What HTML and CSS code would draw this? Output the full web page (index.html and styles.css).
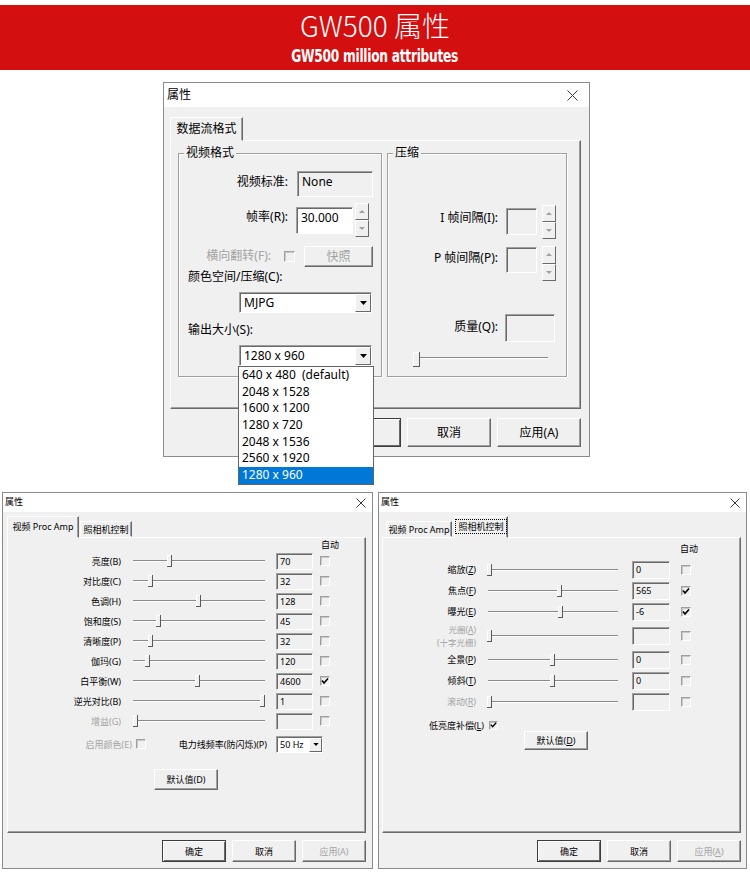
FILE: index.html
```html
<!DOCTYPE html>
<html lang="zh-CN">
<head>
<meta charset="utf-8">
<title>GW500 属性</title>
<link rel="stylesheet" href="styles.css">
</head>
<body>
<header class="banner">
  <h1 class="banner-title">GW500 属性</h1>
  <p class="banner-sub">GW500 million attributes</p>
</header>

<section class="dlg dlg-top">
  <div class="titlebar tb-top">
    <span>属性</span>
    <svg class="close close-top" viewBox="0 0 11 11"><path d="M0.5 0.5L10.5 10.5M10.5 0.5L0.5 10.5"/></svg>
  </div>
  <div class="body-top">
    <div class="tabs"><div class="tab tab-top">数据流格式</div></div>
    <div class="panel panel-top">
      <div class="group g-video">
        <span class="legend">视频格式</span>
        <div class="frow r-std">
          <span class="flabel">视频标准:</span>
          <div class="field ro f-std">None</div>
        </div>
        <div class="frow r-rate">
          <span class="flabel">帧率(R):</span>
          <div class="field f-rate">30.000</div>
          <div class="spin spin-rate">
            <span class="spin-btn"><svg viewBox="0 0 6 3"><path d="M0 3L3 0L6 3z"/></svg></span>
            <span class="spin-btn"><svg viewBox="0 0 6 3"><path d="M0 0L6 0L3 3z"/></svg></span>
          </div>
        </div>
        <div class="frow r-flip">
          <span class="flabel flabel-flip dis">横向翻转(F):</span>
          <span class="chk chk-top"></span>
          <span class="btn btn-snap dis">快照</span>
        </div>
        <div class="plabel pl-color">颜色空间/压缩(C):</div>
        <div class="combo combo-top c-mjpg">
          <span class="combo-val">MJPG</span>
          <span class="combo-btn"><svg viewBox="0 0 7 4"><path d="M0 0H7L3.5 4z"/></svg></span>
        </div>
        <div class="plabel pl-size">输出大小(S):</div>
        <div class="combo combo-top c-size">
          <span class="combo-val">1280 x 960</span>
          <span class="combo-btn"><svg viewBox="0 0 7 4"><path d="M0 0H7L3.5 4z"/></svg></span>
          <ul class="dropdown">
            <li>640 x 480  (default)</li>
            <li>2048 x 1528</li>
            <li>1600 x 1200</li>
            <li>1280 x 720</li>
            <li>2048 x 1536</li>
            <li>2560 x 1920</li>
            <li class="sel">1280 x 960</li>
          </ul>
        </div>
      </div>
      <div class="group g-comp">
        <span class="legend">压缩</span>
        <div class="frow r-i">
          <span class="flabel2 fl-i">I 帧间隔(I):</span>
          <div class="field ro f-i"></div>
          <div class="spin spin2">
            <span class="spin-btn"><svg viewBox="0 0 6 3"><path d="M0 3L3 0L6 3z"/></svg></span>
            <span class="spin-btn"><svg viewBox="0 0 6 3"><path d="M0 0L6 0L3 3z"/></svg></span>
          </div>
        </div>
        <div class="frow r-p">
          <span class="flabel2 fl-p">P 帧间隔(P):</span>
          <div class="field ro f-p"></div>
          <div class="spin spin2 spin-p">
            <span class="spin-btn"><svg viewBox="0 0 6 3"><path d="M0 3L3 0L6 3z"/></svg></span>
            <span class="spin-btn"><svg viewBox="0 0 6 3"><path d="M0 0L6 0L3 3z"/></svg></span>
          </div>
        </div>
        <div class="frow r-q">
          <span class="flabel2 fl-q">质量(Q):</span>
          <div class="field ro f-q"></div>
        </div>
        <div class="slider slider-top">
          <span class="track"></span>
          <span class="thumb thumb-top"></span>
        </div>
      </div>
    </div>
    <div class="btnrow btnrow-top">
      <span class="btn btn-top btn-def">确定</span>
      <span class="btn btn-top">取消</span>
      <span class="btn btn-top">应用(A)</span>
    </div>
  </div>
</section>

<div class="bottom-row">
  <section class="dlg dlg-sm dlg-left">
    <div class="titlebar tb-sm">
      <span>属性</span>
      <svg class="close close-sm" viewBox="0 0 10 10"><path d="M0.5 0.5L9.5 9.5M9.5 0.5L0.5 9.5"/></svg>
    </div>
    <div class="body-sm body-left">
      <div class="tabs tabs-sm">
        <div class="tab tab-sel-sm tab-l1">视频 Proc Amp</div>
        <div class="tab tab-un-sm tab-l2">照相机控制</div>
      </div>
      <div class="panel panel-sm">
        <div class="hdr hdr-left">自动</div>
        <div class="srow srow-l">
          <span class="slabel sl-left">亮度(B)</span>
          <div class="slider slider-sm sl-w-left"><span class="track"></span><span class="thumb" style="left:28.8%"></span></div>
          <div class="field ro val val-left">70</div>
          <span class="chk chk-sm chk-left"></span>
        </div>
        <div class="srow srow-l">
          <span class="slabel sl-left">对比度(C)</span>
          <div class="slider slider-sm sl-w-left"><span class="track"></span><span class="thumb" style="left:14.4%"></span></div>
          <div class="field ro val val-left">32</div>
          <span class="chk chk-sm chk-left"></span>
        </div>
        <div class="srow srow-l">
          <span class="slabel sl-left">色调(H)</span>
          <div class="slider slider-sm sl-w-left"><span class="track"></span><span class="thumb" style="left:50.4%"></span></div>
          <div class="field ro val val-left">128</div>
          <span class="chk chk-sm chk-left"></span>
        </div>
        <div class="srow srow-l">
          <span class="slabel sl-left">饱和度(S)</span>
          <div class="slider slider-sm sl-w-left"><span class="track"></span><span class="thumb" style="left:20.5%"></span></div>
          <div class="field ro val val-left">45</div>
          <span class="chk chk-sm chk-left"></span>
        </div>
        <div class="srow srow-l">
          <span class="slabel sl-left">清晰度(P)</span>
          <div class="slider slider-sm sl-w-left"><span class="track"></span><span class="thumb" style="left:14.4%"></span></div>
          <div class="field ro val val-left">32</div>
          <span class="chk chk-sm chk-left"></span>
        </div>
        <div class="srow srow-l">
          <span class="slabel sl-left">伽玛(G)</span>
          <div class="slider slider-sm sl-w-left"><span class="track"></span><span class="thumb" style="left:12.1%"></span></div>
          <div class="field ro val val-left">120</div>
          <span class="chk chk-sm chk-left"></span>
        </div>
        <div class="srow srow-l">
          <span class="slabel sl-left">白平衡(W)</span>
          <div class="slider slider-sm sl-w-left"><span class="track"></span><span class="thumb" style="left:50%"></span></div>
          <div class="field ro val val-left">4600</div>
          <span class="chk chk-sm chk-left"><svg viewBox="0 0 8 8"><path d="M1 3.5L3 6L7 1.5"/></svg></span>
        </div>
        <div class="srow srow-l">
          <span class="slabel sl-left">逆光对比(B)</span>
          <div class="slider slider-sm sl-w-left"><span class="track"></span><span class="thumb" style="left:99.5%"></span></div>
          <div class="field ro val val-left">1</div>
          <span class="chk chk-sm chk-left"></span>
        </div>
        <div class="srow srow-l">
          <span class="slabel sl-left dis">增益(G)</span>
          <div class="slider slider-sm sl-w-left"><span class="track"></span><span class="thumb" style="left:3.4%"></span></div>
          <div class="field ro val val-left"></div>
          <span class="chk chk-sm chk-left"></span>
        </div>
        <div class="crow">
          <span class="c-lbl1 dis">启用颜色(E)</span>
          <span class="chk chk-sm chk-c"></span>
          <span class="c-lbl2">电力线频率(防闪烁)(P)</span>
          <div class="combo combo-sm">
            <span class="combo-val">50 Hz</span>
            <span class="combo-btn"><svg viewBox="0 0 7 4"><path d="M0 0H7L3.5 4z"/></svg></span>
          </div>
        </div>
        <span class="btn btn-sm btn-defval-left">默认值(D)</span>
      </div>
      <div class="btnrow btnrow-sm">
        <span class="btn btn-sm btn-def">确定</span>
        <span class="btn btn-sm">取消</span>
        <span class="btn btn-sm dis">应用(A)</span>
      </div>
    </div>
  </section>

  <section class="dlg dlg-sm dlg-right">
    <div class="titlebar tb-sm">
      <span>属性</span>
      <svg class="close close-sm" viewBox="0 0 10 10"><path d="M0.5 0.5L9.5 9.5M9.5 0.5L0.5 9.5"/></svg>
    </div>
    <div class="body-sm body-right">
      <div class="tabs tabs-sm tabs-right">
        <div class="tab tab-un-sm tab-r1">视频 Proc Amp</div>
        <div class="tab tab-sel-sm tab-r2"><span class="focus">照相机控制</span></div>
      </div>
      <div class="panel panel-sm">
        <div class="hdr hdr-right">自动</div>
        <div class="srow srow-r">
          <span class="slabel sl-right">缩放(<u>Z</u>)</span>
          <div class="slider slider-sm sl-w-right"><span class="track"></span><span class="thumb" style="left:2.3%"></span></div>
          <div class="field ro val val-right">0</div>
          <span class="chk chk-sm chk-right"></span>
        </div>
        <div class="srow srow-r">
          <span class="slabel sl-right">焦点(<u>F</u>)</span>
          <div class="slider slider-sm sl-w-right"><span class="track"></span><span class="thumb" style="left:56.2%"></span></div>
          <div class="field ro val val-right">565</div>
          <span class="chk chk-sm chk-right"><svg viewBox="0 0 8 8"><path d="M1 3.5L3 6L7 1.5"/></svg></span>
        </div>
        <div class="srow srow-r">
          <span class="slabel sl-right">曝光(<u>E</u>)</span>
          <div class="slider slider-sm sl-w-right"><span class="track"></span><span class="thumb" style="left:56.9%"></span></div>
          <div class="field ro val val-right">-6</div>
          <span class="chk chk-sm chk-right"><svg viewBox="0 0 8 8"><path d="M1 3.5L3 6L7 1.5"/></svg></span>
        </div>
        <div class="srow srow-r srow-tall">
          <span class="slabel sl-right sl-two dis"><span class="ln">光圈(<u>A</u>)</span><span class="ln">(十字光栅)</span></span>
          <div class="slider slider-sm sl-w-right"><span class="track"></span><span class="thumb" style="left:2.3%"></span></div>
          <div class="field ro val val-right"></div>
          <span class="chk chk-sm chk-right"></span>
        </div>
        <div class="srow srow-r">
          <span class="slabel sl-right">全景(<u>P</u>)</span>
          <div class="slider slider-sm sl-w-right"><span class="track"></span><span class="thumb" style="left:50.8%"></span></div>
          <div class="field ro val val-right">0</div>
          <span class="chk chk-sm chk-right"></span>
        </div>
        <div class="srow srow-r">
          <span class="slabel sl-right">倾斜(<u>T</u>)</span>
          <div class="slider slider-sm sl-w-right"><span class="track"></span><span class="thumb" style="left:50.8%"></span></div>
          <div class="field ro val val-right">0</div>
          <span class="chk chk-sm chk-right"></span>
        </div>
        <div class="srow srow-r">
          <span class="slabel sl-right dis">滚动(<u>R</u>)</span>
          <div class="slider slider-sm sl-w-right"><span class="track"></span><span class="thumb" style="left:2.3%"></span></div>
          <div class="field ro val val-right"></div>
          <span class="chk chk-sm chk-right"></span>
        </div>
        <div class="lowrow">
          <span class="low-lbl">低亮度补偿(<u>L</u>)</span>
          <span class="chk chk-sm chk-low"><svg viewBox="0 0 8 8"><path d="M1 3.5L3 6L7 1.5"/></svg></span>
        </div>
        <span class="btn btn-sm btn-defval-right">默认值(<u>D</u>)</span>
      </div>
      <div class="btnrow btnrow-sm">
        <span class="btn btn-sm btn-def">确定</span>
        <span class="btn btn-sm">取消</span>
        <span class="btn btn-sm dis">应用(<u>A</u>)</span>
      </div>
    </div>
  </section>
</div>
</body>
</html>
```

FILE: styles.css
```css
* { box-sizing: border-box; }
html, body { margin: 0; padding: 0; }
body {
  width: 750px;
  height: 881px;
  overflow: hidden;
  background: #fff;
  color: #000;
  font-family: "Noto Sans", "Noto Sans CJK SC", sans-serif;
}

/* ---------- banner ---------- */
.banner {
  margin-top: 5px;
  height: 65px;
  background: #d40f10;
  color: #fff;
  display: flex;
  flex-direction: column;
  align-items: center;
}
.banner-title {
  margin: 0;
  padding-top: 6px;
  font-family: "Noto Sans CJK SC", sans-serif;
  font-weight: 300;
  font-size: 28px;
  line-height: 28px;
  white-space: nowrap;
}
.banner-sub {
  margin: 8px 0 0;
  font-family: "DejaVu Sans", sans-serif;
  font-weight: bold;
  font-size: 18px;
  line-height: 18px;
  letter-spacing: -0.4px;
  white-space: nowrap;
  transform: scaleX(0.68);
}

/* ---------- generic dialog parts ---------- */
.dlg {
  background: #f0f0f0;
  border: 1px solid #8a8a8a;
  display: flex;
  flex-direction: column;
  flex: none;
}
.titlebar {
  background: #fff;
  display: flex;
  align-items: center;
  justify-content: space-between;
  flex: none;
}
.close { fill: none; stroke: #3a3a3a; stroke-width: 1; }
.tabs { display: flex; align-items: flex-end; position: relative; z-index: 1; flex: none; }
.tab {
  border: 1px solid;
  border-color: #fff #696969 transparent #fff;
  box-shadow: inset -1px 0 0 #a0a0a0;
  background: #f0f0f0;
  display: flex;
  align-items: center;
  justify-content: center;
  white-space: nowrap;
  flex: none;
}
.panel {
  border: 1px solid;
  border-color: #fff #696969 #696969 #fff;
  box-shadow: inset -1px -1px 0 #a0a0a0;
  flex: none;
}
.field {
  border: 1px solid;
  border-color: #a0a0a0 #fff #fff #a0a0a0;
  box-shadow: inset 1px 1px 0 #696969;
  background: #fff;
  padding: 3px 0 0 4px;
  flex: none;
  white-space: nowrap;
}
.field.ro { background: #f0f0f0; }
.btn {
  border: 1px solid;
  border-color: #fff #696969 #696969 #fff;
  box-shadow: inset -1px -1px 0 #a0a0a0;
  background: #f0f0f0;
  display: flex;
  align-items: center;
  justify-content: center;
  white-space: nowrap;
  flex: none;
}
.btn-def {
  border-color: #3c3c3c;
  box-shadow: inset 1px 1px 0 #fff, inset -1px -1px 0 #696969;
}
.dis { color: #a3a3a3; }
.chk {
  border: 1px solid;
  border-color: #a0a0a0 #fff #fff #a0a0a0;
  box-shadow: inset 1px 1px 0 #c8c8c8;
  background: #f0f0f0;
  flex: none;
  display: flex;
  align-items: center;
  justify-content: center;
}
.chk svg { width: 8px; height: 8px; fill: none; stroke: #000; stroke-width: 1.6; }
.spin { display: flex; flex-direction: column; flex: none; }
.spin-btn {
  flex: 1;
  border: 1px solid;
  border-color: #fff #696969 #696969 #fff;
  background: #f0f0f0;
  display: flex;
  align-items: center;
  justify-content: center;
}
.spin-btn svg { width: 6px; height: 3px; fill: #a0a0a0; }
.combo {
  position: relative;
  display: flex;
  border: 1px solid;
  border-color: #a0a0a0 #fff #fff #a0a0a0;
  box-shadow: inset 1px 1px 0 #696969;
  background: #fff;
  flex: none;
}
.combo-val { flex: 1; padding: 3px 0 0 4px; white-space: nowrap; }
.combo-btn {
  margin: 1px 0 0 0;
  border: 1px solid;
  border-color: #fff #696969 #696969 #fff;
  background: #f0f0f0;
  display: flex;
  align-items: center;
  justify-content: center;
  flex: none;
}
.combo-btn svg { width: 7px; height: 4px; fill: #000; }
.slider { position: relative; flex: none; }
.track {
  position: absolute;
  left: 0;
  right: 0;
  height: 2px;
  border-top: 1px solid #8a8a8a;
  border-bottom: 1px solid #fff;
}
.thumb {
  position: absolute;
  background: #f0f0f0;
  border-right: 1px solid #5a5a5a;
  border-bottom: 1px solid #5a5a5a;
  box-shadow: inset 1px 1px 0 #fff;
}
.btnrow { display: flex; justify-content: flex-end; flex: none; }

/* ---------- top dialog ---------- */
.dlg-top {
  margin: 12px 0 0 163px;
  width: 427px;
  height: 375px;
  font-size: 12px;
  line-height: 14px;
}
.tb-top { height: 24px; padding: 0 11px 0 3px; }
.close-top { width: 11px; height: 11px; }
.body-top { padding: 10px 0 0 6px; }
.tab-top { width: 73px; height: 24px; margin-bottom: -1px; padding-bottom: 1px; }
.panel-top {
  width: 411px;
  height: 269px;
  padding: 5px 0 0 7px;
  display: flex;
  gap: 5px;
}
.group {
  position: relative;
  margin-top: 7px;
  border: 1px solid #a0a0a0;
  box-shadow: inset 1px 1px 0 #fff, 1px 1px 0 #fff;
  height: 224px;
  display: flex;
  flex-direction: column;
  flex: none;
}
.g-video { width: 204px; }
.g-comp { width: 180px; }
.legend {
  position: absolute;
  top: -8px;
  left: 5px;
  padding: 0 2px;
  background: #f0f0f0;
  white-space: nowrap;
}
.frow { display: flex; align-items: flex-start; flex: none; }
.flabel { width: 109px; text-align: right; flex: none; white-space: nowrap; }
.flabel2 { width: 110px; text-align: right; flex: none; white-space: nowrap; }

.r-std { margin-top: 17px; height: 26px; }
.r-std .flabel { padding-top: 4px; }
.f-std { margin-left: 9px; width: 76px; height: 26px; }

.r-rate { margin-top: 6px; height: 34px; }
.r-rate .flabel { padding-top: 7px; }
.f-rate { margin: 4px 0 0 8px; width: 57px; height: 27px; }
.spin-rate { margin-left: 2px; width: 14px; height: 34px; }

.r-flip { margin-top: 8px; height: 22px; }
.flabel-flip { width: 92px; padding-top: 4px; }
.chk-top { margin: 6px 0 0 13px; width: 11px; height: 11px; }
.btn-snap { margin: 1px 0 0 9px; width: 69px; height: 21px; }

.plabel { padding-left: 9px; flex: none; white-space: nowrap; }
.pl-color { margin-top: 3px; }
.pl-size { margin-top: 10px; }
.combo-top { margin-left: 60px; width: 133px; height: 21px; }
.combo-top .combo-btn { width: 16px; height: 18px; }
.c-mjpg { margin-top: 8px; }
.c-size { margin-top: 8px; }

.dropdown {
  position: absolute;
  top: 20px;
  left: -2px;
  width: 136px;
  margin: 0;
  padding: 0;
  list-style: none;
  border: 1px solid #646464;
  background: #fff;
  z-index: 5;
}
.dropdown li {
  height: 16.7px;
  line-height: 16.7px;
  padding-left: 3px;
  white-space: pre;
}
.dropdown li.sel { background: #0078d7; color: #fff; }

.r-i { margin-top: 51px; height: 34px; }
.fl-i { padding-top: 6px; }
.f-i { margin: 3px 0 0 8px; width: 31px; height: 27px; }
.spin2 { margin-left: 5px; width: 14px; height: 34px; }
.r-p { margin-top: 7px; height: 35px; }
.fl-p { padding-top: 5px; }
.f-p { margin: 1px 0 0 8px; width: 31px; height: 26px; }
.spin-p { height: 35px; }
.r-q { margin-top: 33px; height: 28px; }
.fl-q { padding-top: 6px; }
.f-q { margin-left: 7px; width: 50px; height: 28px; }
.slider-top { margin: 10px 0 0 25px; width: 135px; height: 15px; }
.slider-top .track { top: 5px; }
.thumb-top { left: 0; top: 0; width: 7px; height: 15px; }

.btnrow-top { margin-top: 9px; width: 411px; gap: 6px; }
.btn-top { width: 84px; height: 29px; }

/* ---------- bottom dialogs ---------- */
.bottom-row { display: flex; gap: 5px; margin: 35px 0 0 2px; }
.dlg-sm { height: 377px; font-size: 9px; line-height: 11px; }
.dlg-left { width: 371px; }
.dlg-right { width: 369px; }
.tb-sm { height: 19px; padding: 0 6px 2px 2px; }
.close-sm { width: 10px; height: 10px; margin-top: 2px; }
.body-sm { padding-top: 4px; }
.body-left { padding-left: 4px; }
.body-right { padding-left: 3px; }
.tabs-sm { height: 21px; }
.tabs-right { padding-left: 4px; }
.tab-sel-sm { height: 22px; margin-bottom: -1px; padding-bottom: 2px; }
.tab-un-sm { height: 16px; }
.tab-l1 { width: 72px; }
.tab-l2 { width: 52px; margin-left: 1px; }
.tab-r1 { width: 66px; }
.tab-r2 { width: 54px; margin-left: 2px; }
.focus { outline: 1px dotted #000; outline-offset: 1px; padding: 0 1px; }

.panel-sm {
  width: 359px;
  height: 296px;
  display: flex;
  flex-direction: column;
}
.hdr { flex: none; white-space: nowrap; }
.hdr-left { height: 13px; line-height: 13px; padding-left: 313px; }
.hdr-right { height: 21px; line-height: 21px; padding-left: 297px; }

.srow { display: flex; align-items: center; flex: none; }
.srow-l { height: 20px; }
.srow-r { height: 21px; }
.srow-tall { height: 27px; }
.slabel { text-align: right; flex: none; white-space: nowrap; }
.sl-two { display: flex; flex-direction: column; align-items: flex-end; font-size: 8.5px; }
.sl-two .ln { line-height: 13px; height: 13px; }
.sl-left { width: 113px; }
.sl-right { width: 93px; }
.slider-sm { height: 14px; }
.slider-sm .track { top: 6px; }
.slider-sm .thumb { top: 1px; width: 5px; height: 12px; margin-left: -4px; }
.sl-w-left { margin-left: 12px; width: 132px; }
.sl-w-right { margin-left: 12px; width: 130px; }
.val { padding: 2px 0 0 3px; line-height: 11px; }
.val-left { margin-left: 11px; width: 37px; height: 17px; }
.val-right { margin-left: 14px; width: 38px; height: 18px; }
.chk-sm { width: 10px; height: 10px; }
.chk-left { margin-left: 7px; }
.chk-right { margin-left: 11px; }

.crow { display: flex; align-items: center; height: 26px; flex: none; }
.c-lbl1 { width: 124px; text-align: right; white-space: nowrap; flex: none; }
.chk-c { margin-left: 4px; }
.c-lbl2 { width: 121px; text-align: right; white-space: nowrap; flex: none; }
.combo-sm { margin-left: 9px; width: 47px; height: 17px; }
.combo-sm .combo-val { padding: 2px 0 0 3px; }
.combo-sm .combo-btn { width: 13px; height: 14px; }
.combo-sm .combo-btn svg { width: 6px; height: 3px; }

.btn-sm { width: 64px; height: 21px; }
.btn-defval-left { margin: 12px 0 0 146px; }
.lowrow { display: flex; align-items: center; height: 12px; margin-top: 7px; flex: none; }
.low-lbl { width: 101px; text-align: right; white-space: nowrap; flex: none; }
.chk-low { margin-left: 5px; width: 9px; height: 9px; }
.btn-defval-right { margin-left: 141px; height: 19px; }

.btnrow-sm { margin-top: 7px; width: 359px; gap: 6px; }
.btnrow-sm .btn-sm { height: 22px; }
```
